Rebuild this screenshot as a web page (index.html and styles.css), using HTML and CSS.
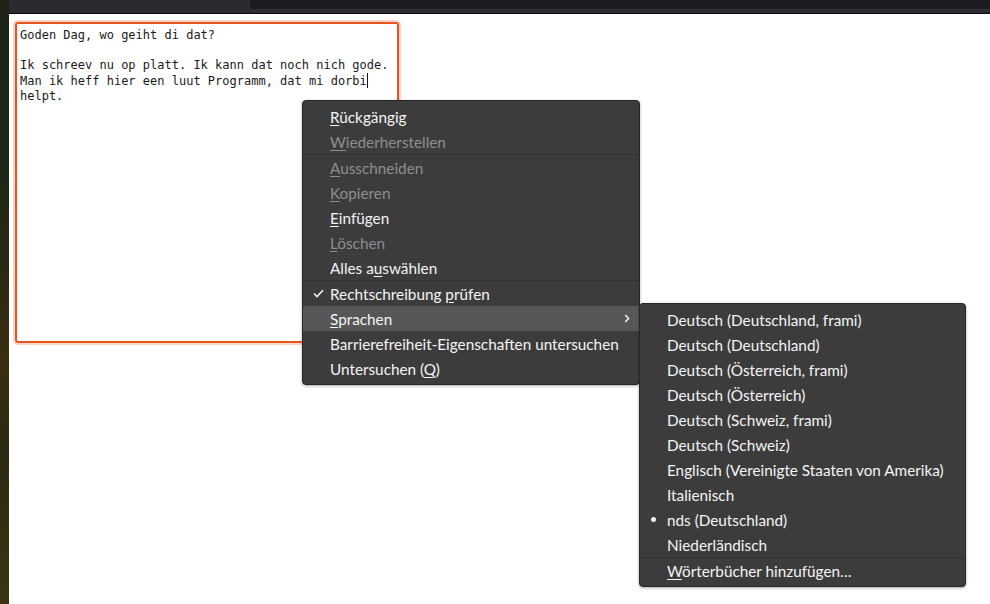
FILE: index.html
```html
<!DOCTYPE html>
<html lang="de">
<head>
<meta charset="utf-8">
<title>Kontextmenü</title>
<link rel="stylesheet" href="styles.css">
</head>
<body>
<div class="wallpaper"></div>
<div class="window">
  <div class="topbar">
    <div class="topbar-left"></div>
    <div class="tab-area">
      <div class="tab"></div>
      <div class="tab-band"></div>
    </div>
  </div>
  <div class="content">
    <div class="textarea">Goden Dag, wo geiht di dat?

Ik schreev nu op platt. Ik kann dat noch nich gode.
Man ik heff hier een luut Programm, dat mi dorbi<span class="caret"></span>
helpt.</div>
  </div>
</div>

<div class="menu main-menu">
  <div class="item"><span class="label"><span class="u">R</span>ückgängig</span></div>
  <div class="item disabled"><span class="label"><span class="u">W</span>iederherstellen</span></div>
  <div class="sep"></div>
  <div class="item disabled"><span class="label"><span class="u">A</span>usschneiden</span></div>
  <div class="item disabled"><span class="label"><span class="u">K</span>opieren</span></div>
  <div class="item"><span class="label"><span class="u">E</span>infügen</span></div>
  <div class="item disabled"><span class="label"><span class="u">L</span>öschen</span></div>
  <div class="item"><span class="label">Alles a<span class="u">u</span>swählen</span></div>
  <div class="sep"></div>
  <div class="item"><svg class="check" width="11" height="9" viewBox="0 0 11 9"><path d="M1 4.5 L4 7.5 L10 1.2" fill="none" stroke="#f2f2f2" stroke-width="1.6"/></svg><span class="label">Rechtschreibung <span class="u">p</span>rüfen</span></div>
  <div class="item active"><span class="label"><span class="u">S</span>prachen</span><svg class="arrow" width="6" height="9" viewBox="0 0 6 9"><path d="M1.2 1 L4.6 4.5 L1.2 8" fill="none" stroke="#f2f2f2" stroke-width="1.5"/></svg></div>
  <div class="item"><span class="label">Barrierefreiheit-Eigenschaften untersuchen</span></div>
  <div class="item"><span class="label">Untersuchen (<span class="u">Q</span>)</span></div>
</div>

<div class="menu sub-menu">
  <div class="item"><span class="label">Deutsch (Deutschland, frami)</span></div>
  <div class="item"><span class="label">Deutsch (Deutschland)</span></div>
  <div class="item"><span class="label">Deutsch (Österreich, frami)</span></div>
  <div class="item"><span class="label">Deutsch (Österreich)</span></div>
  <div class="item"><span class="label">Deutsch (Schweiz, frami)</span></div>
  <div class="item"><span class="label">Deutsch (Schweiz)</span></div>
  <div class="item"><span class="label">Englisch (Vereinigte Staaten von Amerika)</span></div>
  <div class="item"><span class="label">Italienisch</span></div>
  <div class="item"><span class="bullet"></span><span class="label">nds (Deutschland)</span></div>
  <div class="item"><span class="label">Niederländisch</span></div>
  <div class="sep"></div>
  <div class="item"><span class="label"><span class="u">W</span>örterbücher hinzufügen…</span></div>
</div>
</body>
</html>
```

FILE: styles.css
```css
html, body {
  margin: 0;
  padding: 0;
  height: 100%;
  overflow: hidden;
  background: #ffffff;
}

body {
  display: flex;
  width: 990px;
  height: 604px;
  position: relative;
}

.wallpaper {
  width: 9px;
  flex: 0 0 9px;
  background: linear-gradient(180deg, #1d2417 0%, #1f2618 25%, #2a2a14 45%, #3a2d12 60%, #2c2a14 75%, #3b3512 100%);
}

.window {
  flex: 1;
  display: flex;
  flex-direction: column;
  background: #ffffff;
}

.topbar {
  height: 13px;
  display: flex;
  border-bottom: 1px solid #0a0a0c;
  background: #2b2a31;
  overflow: hidden;
}

.topbar-left {
  width: 241px;
}

.tab-area {
  flex: 1;
  display: flex;
  flex-direction: column;
}

.tab {
  height: 9px;
  background: #1c1b21;
  border-bottom-left-radius: 3px;
}

.tab-band {
  flex: 1;
  background: #2d2c34;
}

.content {
  flex: 1;
  padding: 8px 0 0 6px;
}

.textarea {
  width: 374px;
  height: 310px;
  border: 2px solid #e95420;
  border-radius: 3px;
  box-shadow: 0 0 0 2px #fbd6c7;
  padding: 4px 3px 3px 3px;
  box-sizing: content-box;
  font-family: "DejaVu Sans Mono", monospace;
  font-size: 12px;
  line-height: 15px;
  color: #1a1a1a;
  white-space: pre;
}

.caret {
  display: inline-block;
  width: 1px;
  height: 15px;
  background: #111;
  vertical-align: -3px;
}

.menu {
  position: absolute;
  background: #3c3c3c;
  border: 1px solid #272727;
  border-radius: 4px;
  padding: 3px 0;
  box-shadow: 0 1px 3px rgba(0, 0, 0, 0.35);
  font-family: "Lato", "Noto Sans", sans-serif;
  font-size: 15.3px;
  color: #f4f4f4;
  box-sizing: border-box;
}

.main-menu {
  left: 302px;
  top: 100px;
  width: 338px;
  height: 285px;
}

.sub-menu {
  left: 639px;
  top: 303px;
  width: 327px;
  height: 284px;
}

.item {
  height: 25px;
  display: flex;
  align-items: center;
  padding-left: 27px;
  position: relative;
  white-space: nowrap;
}

.label {
  white-space: pre;
}

.item.disabled {
  color: #8e8e8e;
}

.item.active {
  background: #575757;
}

.u {
  text-decoration: underline;
  text-underline-offset: 2px;
  text-decoration-thickness: 1px;
}

.sep {
  height: 1px;
  background: #333333;
}

.check {
  position: absolute;
  left: 10px;
  top: 8px;
}

.arrow {
  position: absolute;
  right: 9px;
  top: 8px;
}

.bullet {
  position: absolute;
  left: 11px;
  top: 10px;
  width: 5px;
  height: 5px;
  border-radius: 50%;
  background: #f2f2f2;
}
```
